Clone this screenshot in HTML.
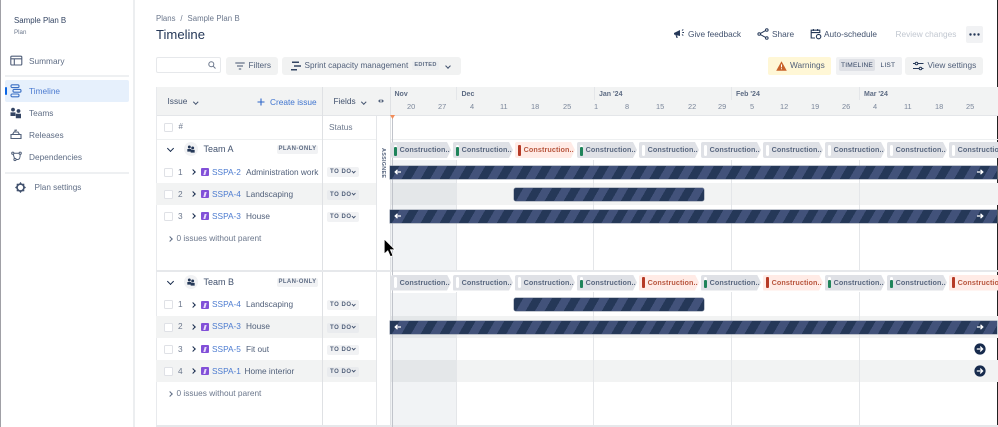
<!DOCTYPE html>
<html><head><meta charset="utf-8"><style>
html,body{margin:0;padding:0;background:#fff}
#r{position:relative;width:998px;height:427px;overflow:hidden;background:#fff;font-family:"Liberation Sans",sans-serif;color:#42526e;filter:blur(.35px)}
#r div,#r span.a,#r svg{position:absolute}
.t{position:absolute;white-space:nowrap;font-size:8.3px;line-height:12px;color:#505f79}
.k{color:#4c7bd0}
.cb{width:7px;height:7px;border:1px solid #dfe1e6;border-radius:1.5px;left:164px;background:#fff}
.n{left:178px;color:#6b778c}
.ep{width:8px;height:8px;left:201px;background:#8250d8;border-radius:1px}
.ep:after{content:"";position:absolute;left:3px;top:1.5px;width:2px;height:5px;background:#e8dcfa;transform:skewX(-15deg)}
.td{left:327px;width:32px;height:10px;background:#f1f2f4;border-radius:2px;font-size:6px;font-weight:bold;line-height:10px;color:#505f79;padding-left:3px;box-sizing:border-box;letter-spacing:.55px}
.td:after{content:"";position:absolute;right:4px;top:2.6px;width:2.4px;height:2.4px;border:solid #42526e;border-width:0 1px 1px 0;transform:rotate(45deg)}
.ch{height:16px;width:60px;background:#dfe1e6;clip-path:polygon(0 0,56px 0,60px 8px,56px 16px,0 16px);border-radius:2px 0 0 2px;font-size:7.2px;font-weight:bold;line-height:15px;color:#5a6880;white-space:nowrap;letter-spacing:.1px;padding-left:8.6px;box-sizing:border-box;overflow:hidden}
.ch i{position:absolute;left:2.5px;top:2.5px;width:3px;height:11px;border-radius:1.5px;background:#fff}
.ch b{position:absolute;left:2.5px;top:5px;width:3px;height:8.5px;border-radius:1px;background:#1f845a}
.ch.rd{background:#ffebe6;color:#b9573f}
.ch.rd b{top:2.5px;height:11px;background:#b63a26}
.bar{height:13px;background:repeating-linear-gradient(120deg,#253858 0,#253858 8.2px,#42527a 8.2px,#42527a 16.5px);box-shadow:0 0 0 .5px #8993a4}
.bm{font-size:7.4px;line-height:10px;color:#7a869a;top:102px;white-space:nowrap;position:absolute}
.mo{font-size:7px;line-height:10px;color:#5e6c84;font-weight:bold;top:90px;position:absolute;white-space:nowrap}
.v{width:1px;background:#e4e6e9}
.btn{background:#f1f2f2;border-radius:3px;height:18px}
.sn{left:29px;font-size:8.3px;color:#5e6c84}
.plan{font-size:6px;font-weight:bold;color:#5e6c84;background:#f1f2f4;border-radius:2px;height:9px;line-height:9px;left:277px;width:41px;text-align:center;letter-spacing:.4px}
.chev{width:4px;height:4px;border:solid #172b4d;border-width:0 1.4px 1.4px 0;transform:rotate(45deg)}
.chevr{left:191px;width:3px;height:3px;border:solid #172b4d;border-width:1.3px 1.3px 0 0;transform:rotate(45deg)}
</style></head><body><div id="r">

<!-- window edges -->
<div style="left:0;top:0;width:1px;height:427px;background:#a0a0a6"></div>
<div style="left:997px;top:0;width:1px;height:427px;background:#222"></div>

<!-- sidebar -->
<div style="left:133px;top:0;width:1.5px;height:427px;background:#eceef0"></div>
<span class="t" style="left:14px;top:15px;font-size:7.9px;color:#344563">Sample Plan B</span>
<span class="t" style="left:14px;top:27px;font-size:6.2px;color:#6b778c">Plan</span>
<svg style="left:10px;top:55px" width="13" height="12" viewBox="0 0 13 12" fill="none" stroke="#505f79" stroke-width="1.1"><rect x=".8" y="1.2" width="11" height="8.8" rx="1"/><path d="M.8 3.8h11M4.3 3.8V10"/></svg>
<span class="t sn" style="top:55px">Summary</span>
<div style="left:5px;top:75px;width:124px;height:1.5px;background:#eef0f2"></div>
<div style="left:5px;top:80px;width:124px;height:22px;background:#e6f0fc;border-radius:2px"></div>
<div style="left:5px;top:87px;width:2px;height:8px;background:#0c66e4;border-radius:1px"></div>
<svg style="left:10px;top:84px" width="12" height="14" viewBox="0 0 12 14" fill="none" stroke="#3a6fc4" stroke-width="1.1"><rect x="1" y=".8" width="8" height="2.8" rx="1.2"/><rect x="3" y="5.4" width="8" height="2.8" rx="1.2"/><rect x="1" y="10" width="8" height="2.8" rx="1.2"/></svg>
<span class="t sn" style="top:85px;color:#4c7bd0">Timeline</span>
<svg style="left:10px;top:107px" width="12" height="12" viewBox="0 0 12 12" fill="#344563"><circle cx="3" cy="2.6" r="1.9"/><circle cx="8.5" cy="4" r="1.9"/><path d="M.5 5.4h5v3.6h-5zM5.8 6.8h5.2v4.4H5.8z"/></svg>
<span class="t sn" style="top:107px">Teams</span>
<svg style="left:10px;top:129px" width="12" height="11" viewBox="0 0 12 11" fill="none" stroke="#505f79" stroke-width="1.1"><path d="M1 5.5h10v4H1zM2.5 5.5l1.5-2.5h4l1.5 2.5M5 3V1.2h2"/></svg>
<span class="t sn" style="top:129px">Releases</span>
<svg style="left:11px;top:151px" width="11" height="11" viewBox="0 0 11 11" fill="none" stroke="#505f79" stroke-width="1"><circle cx="1.8" cy="2.2" r="1.1"/><circle cx="9.2" cy="2.2" r="1.1"/><circle cx="4" cy="8.5" r="1.1"/><path d="M3 2.2h5M2.2 3.3 3.5 7.4M5.1 8.5H7C8.5 8.5 9.2 6 9.2 3.3"/></svg>
<span class="t sn" style="top:151px">Dependencies</span>
<div style="left:5px;top:172px;width:124px;height:1.5px;background:#eef0f2"></div>
<svg style="left:15px;top:182px" width="11" height="11" viewBox="0 0 11 11" fill="none" stroke="#42526e" stroke-width="1.7"><circle cx="5.5" cy="5.5" r="3.5"/><path d="M5.5.3v1.6M5.5 9.1v1.6M.3 5.5h1.6M9.1 5.5h1.6M1.8 1.8l1.1 1.1M8.1 8.1l1.1 1.1M1.8 9.2l1.1-1.1M8.1 2.9l1.1-1.1" stroke-width="1.2"/></svg>
<span class="t" style="left:34.5px;top:182px;color:#5e6c84;font-size:8.2px">Plan settings</span>

<!-- header -->
<span class="t" style="left:156px;top:13px;font-size:7.8px;color:#6b778c;word-spacing:.3px">Plans &nbsp;/&nbsp; Sample Plan B</span>
<span class="t" style="left:156px;top:27px;font-size:13.1px;line-height:16px;color:#253858">Timeline</span>

<svg style="left:673px;top:28px" width="12" height="11" viewBox="0 0 12 11"><path d="M1 5l6-3v6L1 6.5zM2.5 7l1 3h1.2L4 7z" fill="#253858"/><path d="M9 2.5l1.3-1M9.3 4.5H11M9 6.5l1.3 1" stroke="#253858" fill="none"/></svg>
<span class="t" style="left:688px;top:28px;color:#42526e">Give feedback</span>
<svg style="left:757px;top:28px" width="12" height="12" viewBox="0 0 12 12" fill="none" stroke="#253858" stroke-width="1"><circle cx="2.2" cy="6" r="1.3"/><circle cx="9.8" cy="2" r="1.3"/><circle cx="9.8" cy="10" r="1.3"/><path d="M3.4 5.4l5.2-2.8M3.4 6.6l5.2 2.8"/></svg>
<span class="t" style="left:772px;top:28px;color:#42526e">Share</span>
<svg style="left:810px;top:28px" width="12" height="12" viewBox="0 0 12 12" fill="none" stroke="#253858" stroke-width="1.1"><path d="M5 10H1.2V2.2h8.6V5M1.2 4.6h8.6M3.4 1v2M7.6 1v2"/><circle cx="8.6" cy="8.6" r="2.2"/></svg>
<span class="t" style="left:824px;top:28px;color:#42526e">Auto-schedule</span>
<span class="t" style="left:895.5px;top:28px;color:#c1c7d0">Review changes</span>
<div style="left:966px;top:26px;width:17px;height:17px;background:#f1f2f4;border-radius:2px"></div>
<svg style="left:969px;top:33px" width="11" height="3" viewBox="0 0 11 3" fill="#253858"><circle cx="1.5" cy="1.5" r="1.2"/><circle cx="5.5" cy="1.5" r="1.2"/><circle cx="9.5" cy="1.5" r="1.2"/></svg>

<!-- toolbar -->
<div style="left:156px;top:57px;width:65px;height:16px;border:1px solid #e6e8eb;border-radius:2px;box-sizing:border-box"></div>
<svg style="left:208px;top:61px" width="8" height="8" viewBox="0 0 8 8" fill="none" stroke="#6b778c" stroke-width="1"><circle cx="3.3" cy="3.3" r="2.5"/><path d="M5.2 5.2 7.5 7.5"/></svg>
<div class="btn" style="left:226px;top:56.5px;width:52px"></div>
<svg style="left:235px;top:62px" width="10" height="8" viewBox="0 0 10 8" stroke="#42526e" stroke-width="1.1"><path d="M.3 1h9.4M2 4h6M3.8 7h2.4"/></svg>
<span class="t" style="left:248.5px;top:59px;color:#505f79">Filters</span>
<div class="btn" style="left:282px;top:56.5px;width:179px"></div>
<svg style="left:291px;top:61px" width="10" height="10" viewBox="0 0 10 10" stroke="#344563" stroke-width="1.5"><path d="M1 1.2h7M3 5h7M0 8.8h6"/></svg>
<span class="t" style="left:304.5px;top:59.5px;color:#505f79;font-size:8.2px">Sprint capacity management</span>
<div style="left:412px;top:61px;width:27px;height:9px;background:#eceef0;border-radius:2px;font-size:5.6px;font-weight:bold;line-height:9px;text-align:center;color:#5e6c84;letter-spacing:.3px">EDITED</div>
<div class="chev" style="left:446px;top:63.5px;width:3px;height:3px;border-color:#42526e;border-width:0 1px 1px 0"></div>

<div style="left:768px;top:56.5px;width:63px;height:18px;background:#fff7d6;border-radius:2px"></div>
<svg style="left:776px;top:61px" width="11" height="10" viewBox="0 0 11 10"><path d="M5.5.3 10.8 9.7H.2z" fill="#c9632a"/><path d="M5.5 3.4v3M5.5 7.3v1" stroke="#fff" stroke-width="1"/></svg>
<span class="t" style="left:790px;top:59px;color:#505f79">Warnings</span>
<div style="left:835.5px;top:56.5px;width:66px;height:18px;background:#f1f2f4;border-radius:2px"></div>
<div style="left:839px;top:59px;width:36px;height:12px;background:#dfe1e6;border-radius:2px"></div>
<span class="t" style="left:841px;top:59.5px;font-size:6.6px;color:#344563;letter-spacing:.2px">TIMELINE</span>
<span class="t" style="left:880.5px;top:59.5px;font-size:6.6px;color:#344563;letter-spacing:.2px">LIST</span>
<div class="btn" style="left:905px;top:56.5px;width:78px"></div>
<svg style="left:913px;top:61px" width="11" height="10" viewBox="0 0 11 10" fill="none" stroke="#253858" stroke-width="1"><path d="M0 2.5h10.5M0 7.5h10.5"/><circle cx="3.5" cy="2.5" r="1.3" fill="#f1f2f2"/><circle cx="7.5" cy="7.5" r="1.3" fill="#f1f2f2"/></svg>
<span class="t" style="left:927.5px;top:59px;color:#505f79">View settings</span>

<!-- table header -->
<div style="left:156px;top:87px;width:842px;height:28px;background:#f2f3f3"></div>
<div style="left:156px;top:115px;width:842px;height:1px;background:#e4e6e9"></div>
<div style="left:156px;top:139px;width:842px;height:1px;background:#eef0f1"></div>
<div style="left:156px;top:87px;width:1px;height:340px;background:#e8eaed"></div>
<span class="t" style="left:167.5px;top:95px;color:#42526e">Issue</span>
<div class="chev" style="left:193.5px;top:100px;width:2.5px;height:2.5px;border-color:#42526e;border-width:0 1px 1px 0"></div>
<svg style="left:257px;top:98px" width="8" height="8" stroke="#2f66c8" stroke-width="1.1"><path d="M4 .5v7M.5 4h7"/></svg>
<span class="t" style="left:270px;top:96px;color:#3f74cf">Create issue</span>
<span class="t" style="left:333.5px;top:95px;color:#42526e">Fields</span>
<div class="chev" style="left:362px;top:100px;width:2.5px;height:2.5px;border-color:#42526e;border-width:0 1px 1px 0"></div>
<svg style="left:378px;top:98.5px" width="6" height="4" viewBox="0 0 6 4" fill="#505f79"><path d="M2.4 0v4L0 2zM3.6 0v4L6 2z"/></svg>

<div class="cb" style="top:123px"></div>
<span class="t" style="left:178.5px;top:120.5px;color:#6b778c;font-size:8px">#</span>
<span class="t" style="left:329px;top:120.5px;color:#6b778c">Status</span>

<!-- row backgrounds -->
<div style="left:156px;top:183px;width:842px;height:22px;background:#f2f3f3"></div>
<div style="left:156px;top:316px;width:842px;height:22px;background:#f2f3f3"></div>
<div style="left:156px;top:360px;width:842px;height:22px;background:#f2f3f3"></div>
<div style="left:377px;top:139px;width:13px;height:288px;background:#fff"></div>

<!-- past shading -->
<div style="left:390px;top:160px;width:66px;height:110px;background:rgba(9,30,66,.055)"></div>
<div style="left:390px;top:293px;width:66px;height:132px;background:rgba(9,30,66,.055)"></div>

<!-- columns -->
<div class="v" style="left:322px;top:87px;height:340px;background:#dfe1e4"></div>
<div class="v" style="left:376px;top:115px;height:312px"></div>
<div class="v" style="left:389.5px;top:87px;height:340px;background:#dfe1e4"></div>
<div class="v" style="left:456px;top:87px;height:13px"></div>
<div class="v" style="left:594px;top:87px;height:13px"></div>
<div class="v" style="left:731px;top:87px;height:13px"></div>
<div class="v" style="left:859px;top:87px;height:13px"></div>
<div class="v" style="left:456px;top:160px;height:110px"></div>
<div class="v" style="left:593px;top:160px;height:110px"></div>
<div class="v" style="left:730.5px;top:160px;height:110px"></div>
<div class="v" style="left:859px;top:160px;height:110px"></div>
<div class="v" style="left:456px;top:292px;height:135px"></div>
<div class="v" style="left:593px;top:292px;height:135px"></div>
<div class="v" style="left:730.5px;top:292px;height:135px"></div>
<div class="v" style="left:859px;top:292px;height:135px"></div>
<div style="left:156px;top:270px;width:842px;height:1.5px;background:#e6e8eb"></div>
<div style="left:156px;top:425px;width:842px;height:1.5px;background:#e6e8eb"></div>
<div style="left:392px;top:116px;width:1px;height:311px;background:#c1c4cb"></div>
<svg style="left:390px;top:115px" width="5" height="4"><path d="M0 0h5L2.5 4z" fill="#f18d5a"/></svg>

<!-- months/days -->
<span class="mo" style="left:394.5px">Nov</span><span class="mo" style="left:461.5px">Dec</span><span class="mo" style="left:599px">Jan '24</span><span class="mo" style="left:736px">Feb '24</span><span class="mo" style="left:864px">Mar '24</span>
<span class="bm" style="left:407px">20</span><span class="bm" style="left:438px">27</span><span class="bm" style="left:470px">4</span><span class="bm" style="left:500px">11</span><span class="bm" style="left:531px">18</span><span class="bm" style="left:563px">25</span><span class="bm" style="left:594px">1</span><span class="bm" style="left:625px">8</span><span class="bm" style="left:656px">15</span><span class="bm" style="left:688px">22</span><span class="bm" style="left:718px">29</span><span class="bm" style="left:750px">5</span><span class="bm" style="left:780px">12</span><span class="bm" style="left:811px">19</span><span class="bm" style="left:842px">26</span><span class="bm" style="left:873px">4</span><span class="bm" style="left:904px">11</span><span class="bm" style="left:935px">18</span><span class="bm" style="left:966px">25</span>

<!-- assignee -->
<div style="left:369px;top:158px;width:28px;height:8px;transform:rotate(90deg);font-size:5.4px;font-weight:bold;line-height:8px;color:#505f79;text-align:center;letter-spacing:.3px">ASSIGNEE</div>

<!-- Team A -->
<div class="chev" style="left:167.5px;top:145.5px"></div>
<div style="left:184px;top:142px;width:14px;height:14px;border-radius:50%;background:#f1f2f4"></div>
<svg style="left:187px;top:145px" width="8" height="8" viewBox="0 0 12 12" fill="#253858"><circle cx="3.5" cy="3" r="2.2"/><circle cx="8.5" cy="4.4" r="2.2"/><path d="M.5 6h6v4h-6zM5.5 7.4h6v4h-6z"/></svg>
<span class="t" style="left:203.5px;top:143px;font-size:9px;color:#42526e">Team A</span>
<div class="plan" style="top:145px">PLAN-ONLY</div>

<div class="cb" style="top:168px"></div><span class="t n" style="top:165.5px">1</span><div class="chevr" style="top:170px"></div><div class="ep" style="top:168px"></div>
<span class="t k" style="left:212px;top:165.5px">SSPA-2</span><span class="t" style="left:246px;top:165.5px">Administration work</span>
<div class="td" style="top:167px">TO DO</div>
<div class="cb" style="top:190px"></div><span class="t n" style="top:187.5px">2</span><div class="chevr" style="top:192px"></div><div class="ep" style="top:190px"></div>
<span class="t k" style="left:212px;top:187.5px">SSPA-4</span><span class="t" style="left:246px;top:187.5px">Landscaping</span>
<div class="td" style="top:189.5px;background:#e9ebee">TO DO</div>
<div class="cb" style="top:212px"></div><span class="t n" style="top:209.5px">3</span><div class="chevr" style="top:214px"></div><div class="ep" style="top:212px"></div>
<span class="t k" style="left:212px;top:209.5px">SSPA-3</span><span class="t" style="left:246px;top:209.5px">House</span>
<div class="td" style="top:212px">TO DO</div>
<div class="chevr" style="left:168px;top:237px;border-color:#5e6c84;border-width:1px 1px 0 0"></div>
<span class="t" style="left:176.5px;top:232px;color:#6b778c">0 issues without parent</span>

<!-- Team B -->
<div class="chev" style="left:167.5px;top:279px"></div>
<div style="left:184px;top:275px;width:14px;height:14px;border-radius:50%;background:#f1f2f4"></div>
<svg style="left:187px;top:278px" width="8" height="8" viewBox="0 0 12 12" fill="#253858"><circle cx="3.5" cy="3" r="2.2"/><circle cx="8.5" cy="4.4" r="2.2"/><path d="M.5 6h6v4h-6zM5.5 7.4h6v4h-6z"/></svg>
<span class="t" style="left:203.5px;top:276px;font-size:9px;color:#42526e">Team B</span>
<div class="plan" style="top:278px">PLAN-ONLY</div>

<div class="cb" style="top:300px"></div><span class="t n" style="top:298px">1</span><div class="chevr" style="top:303px"></div><div class="ep" style="top:301px"></div>
<span class="t k" style="left:212px;top:298px">SSPA-4</span><span class="t" style="left:246px;top:298px">Landscaping</span>
<div class="td" style="top:300px">TO DO</div>
<div class="cb" style="top:323px"></div><span class="t n" style="top:320px">2</span><div class="chevr" style="top:325px"></div><div class="ep" style="top:323px"></div>
<span class="t k" style="left:212px;top:320px">SSPA-3</span><span class="t" style="left:246px;top:320px">House</span>
<div class="td" style="top:322.5px;background:#e9ebee">TO DO</div>
<div class="cb" style="top:345px"></div><span class="t n" style="top:342.5px">3</span><div class="chevr" style="top:347px"></div><div class="ep" style="top:345px"></div>
<span class="t k" style="left:212px;top:342.5px">SSPA-5</span><span class="t" style="left:246px;top:342.5px">Fit out</span>
<div class="td" style="top:344.5px">TO DO</div>
<div class="cb" style="top:367px"></div><span class="t n" style="top:365px">4</span><div class="chevr" style="top:369px"></div><div class="ep" style="top:367px"></div>
<span class="t k" style="left:212px;top:365px">SSPA-1</span><span class="t" style="left:244.5px;top:365px">Home interior</span>
<div class="td" style="top:366.5px;background:#e9ebee">TO DO</div>
<div class="chevr" style="left:168px;top:392px;border-color:#5e6c84;border-width:1px 1px 0 0"></div>
<span class="t" style="left:176.5px;top:387px;color:#6b778c">0 issues without parent</span>

<!-- chips team A -->
<div class="ch" style="left:391px;top:142px"><i></i><b></b>Construction..</div>
<div class="ch" style="left:453px;top:142px"><i></i><b></b>Construction..</div>
<div class="ch rd" style="left:515px;top:142px"><b></b>Construction..</div>
<div class="ch" style="left:577px;top:142px"><i></i><b></b>Construction..</div>
<div class="ch" style="left:639px;top:142px"><i></i>Construction..</div>
<div class="ch" style="left:701px;top:142px"><i></i>Construction..</div>
<div class="ch" style="left:763px;top:142px"><i></i>Construction..</div>
<div class="ch" style="left:825px;top:142px"><i></i>Construction..</div>
<div class="ch" style="left:887px;top:142px"><i></i>Construction..</div>
<div class="ch" style="left:949px;top:142px"><i></i>Construction..</div>

<!-- chips team B -->
<div class="ch" style="left:391px;top:274.5px"><i></i>Construction..</div>
<div class="ch" style="left:453px;top:274.5px"><i></i>Construction..</div>
<div class="ch" style="left:515px;top:274.5px"><i></i>Construction..</div>
<div class="ch" style="left:577px;top:274.5px"><i></i><b></b>Construction..</div>
<div class="ch rd" style="left:639px;top:274.5px"><b></b>Construction..</div>
<div class="ch" style="left:701px;top:274.5px"><i></i><b></b>Construction..</div>
<div class="ch rd" style="left:763px;top:274.5px"><b></b>Construction..</div>
<div class="ch" style="left:825px;top:274.5px"><i></i><b></b>Construction..</div>
<div class="ch" style="left:887px;top:274.5px"><i></i><b></b>Construction..</div>
<div class="ch rd" style="left:949px;top:274.5px"><b></b>Construction..</div>

<!-- bars -->
<div class="bar" style="left:390px;top:165.5px;width:607px"></div>
<div class="bar" style="left:514px;top:187.5px;width:190px;border-radius:2px"></div>
<div class="bar" style="left:390px;top:209.5px;width:607px"></div>
<div class="bar" style="left:514px;top:298px;width:190px;border-radius:2px"></div>
<div class="bar" style="left:390px;top:320.5px;width:607px"></div>

<svg style="left:394px;top:169px" width="7" height="6"><path d="M7 3H1.5M3.5 .8 1.2 3l2.3 2.2" stroke="#fff" stroke-width="1.3" fill="none"/></svg>
<svg style="left:394px;top:213px" width="7" height="6"><path d="M7 3H1.5M3.5 .8 1.2 3l2.3 2.2" stroke="#fff" stroke-width="1.3" fill="none"/></svg>
<svg style="left:394px;top:324px" width="7" height="6"><path d="M7 3H1.5M3.5 .8 1.2 3l2.3 2.2" stroke="#fff" stroke-width="1.3" fill="none"/></svg>
<svg style="left:977px;top:169px" width="7" height="6"><path d="M0 3h5.5M3.5 .8 5.8 3 3.5 5.2" stroke="#fff" stroke-width="1.3" fill="none"/></svg>
<svg style="left:977px;top:213px" width="7" height="6"><path d="M0 3h5.5M3.5 .8 5.8 3 3.5 5.2" stroke="#fff" stroke-width="1.3" fill="none"/></svg>
<svg style="left:977px;top:324px" width="7" height="6"><path d="M0 3h5.5M3.5 .8 5.8 3 3.5 5.2" stroke="#fff" stroke-width="1.3" fill="none"/></svg>

<svg style="left:974px;top:343px" width="12" height="12"><circle cx="6" cy="6" r="5.6" fill="#172b4d"/><path d="M2.8 6h5.6M6.2 3.6 8.6 6 6.2 8.4" stroke="#fff" stroke-width="1.3" fill="none"/></svg>
<svg style="left:974px;top:365px" width="12" height="12"><circle cx="6" cy="6" r="5.6" fill="#172b4d"/><path d="M2.8 6h5.6M6.2 3.6 8.6 6 6.2 8.4" stroke="#fff" stroke-width="1.3" fill="none"/></svg>

<!-- cursor -->
<svg style="left:383px;top:238px" width="14" height="21" viewBox="0 0 14 21"><path d="M1.2 1v15l3.6-3.2 2.6 6 2.6-1.2-2.6-5.8h4.8z" fill="#000" stroke="#fff" stroke-width=".8"/></svg>
</div></body></html>
